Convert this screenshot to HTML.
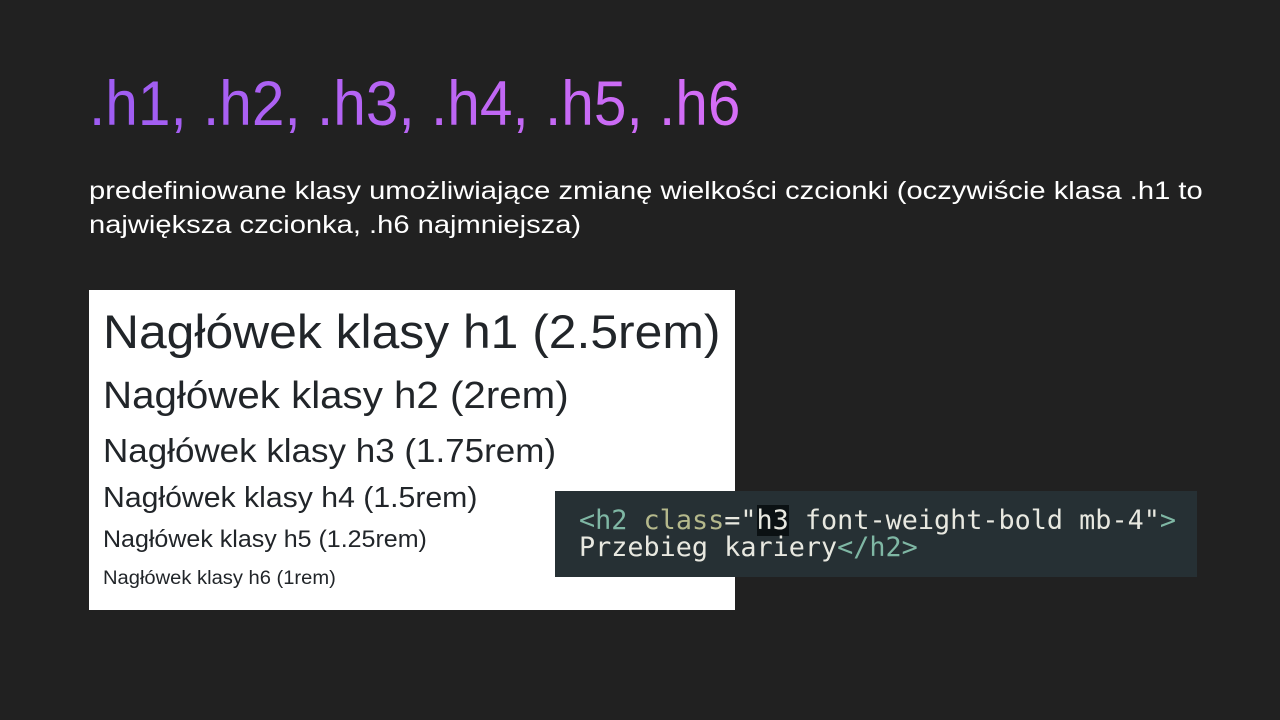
<!DOCTYPE html>
<html><head><meta charset="utf-8"><style>
html,body{margin:0;padding:0;background:#212121;width:1280px;height:720px;overflow:hidden;font-family:"Liberation Sans",sans-serif}
.t{position:absolute;left:89px;top:68px;font-size:63px;line-height:72px;white-space:nowrap;transform:scaleX(0.93);transform-origin:left;background:linear-gradient(90deg,#9d5cf2,#d66ef6);-webkit-background-clip:text;background-clip:text;color:transparent}
.p{position:absolute;left:89px;top:174px;font-size:25px;line-height:34px;color:#fff;white-space:nowrap;transform:scaleX(1.165);transform-origin:left}
.box{position:absolute;left:89px;top:290px;width:646px;height:320px;background:#fff}
.h{position:absolute;left:14px;color:#212529;white-space:nowrap;line-height:1;transform:scaleX(1.06);transform-origin:left}
.code{position:absolute;left:555px;top:491px;width:642px;height:86px;background:#263034;font-family:"DejaVu Sans Mono","Liberation Mono",monospace;font-size:26.8px;line-height:27px;color:#e8e8e0;white-space:pre}
.code div{position:absolute;left:24px;top:16px}
.g{color:#7fb7a4}.o{color:#b5b98c}.hl{background:#0b1113}
</style></head><body>
<div class="t">.h1, .h2, .h3, .h4, .h5, .h6</div>
<div class="p">predefiniowane klasy umożliwiające zmianę wielkości czcionki (oczywiście klasa .h1 to<br>największa czcionka, .h6 najmniejsza)</div>
<div class="box">
<div class="h" style="top:18px;font-size:47px">Nagłówek klasy h1 (2.5rem)</div>
<div class="h" style="top:87px;font-size:38px">Nagłówek klasy h2 (2rem)</div>
<div class="h" style="top:144px;font-size:33px">Nagłówek klasy h3 (1.75rem)</div>
<div class="h" style="top:194px;font-size:28.5px">Nagłówek klasy h4 (1.5rem)</div>
<div class="h" style="top:239px;font-size:23.6px">Nagłówek klasy h5 (1.25rem)</div>
<div class="h" style="top:279px;font-size:19px">Nagłówek klasy h6 (1rem)</div>
</div>
<div class="code"><div><span class="g">&lt;h2</span> <span class="o">class</span>="<span class="hl">h3</span> font-weight-bold mb-4"<span class="g">&gt;</span>
Przebieg kariery<span class="g">&lt;/h2&gt;</span></div></div>
</body></html>
